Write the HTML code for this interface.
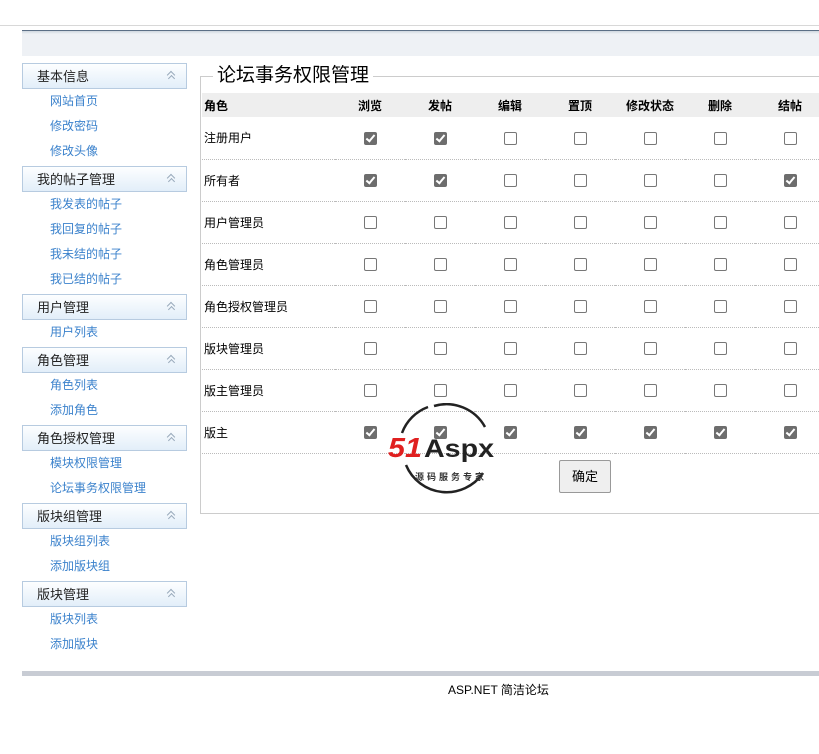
<!DOCTYPE html>
<html><head><meta charset="utf-8"><style>
*{margin:0;padding:0;box-sizing:border-box}
body{width:819px;height:754px;background:#fff;font-family:"Liberation Sans","Noto Sans CJK SC",sans-serif;position:relative;overflow:hidden;color:#000}
.topline{position:absolute;left:0;top:25px;width:819px;height:1px;background:#d8d8d8}
.hbar{position:absolute;left:22px;top:30px;width:797px;height:26px;background:linear-gradient(#cfd6df,#eef1f5 3px,#eef1f5);border-top:1px solid #5b6f86}
.side{position:absolute;left:22px;top:63px;width:165px}
.gh{height:26px;border:1px solid #b7cbe0;background:linear-gradient(#fdfeff,#e2eef9);font-size:13px;line-height:25px;padding-left:14px;position:relative;color:#222}
.gh:after{content:"";position:absolute;right:12px;top:8px;width:5px;height:5px;border-left:1px solid #9ab;border-top:1px solid #9ab;transform:rotate(45deg)}
.gh i{position:absolute;right:12px;top:12px;width:5px;height:5px;border-left:1px solid #9ab;border-top:1px solid #9ab;transform:rotate(45deg)}
.it{height:25px;line-height:25px;font-size:12px;color:#3b82cc;padding-left:28px}
.g{margin-bottom:2px}
fieldset{position:absolute;left:200px;top:66px;width:640px;height:448px;border:1px solid #ccc;border-right:none}
legend{font-size:19px;margin-left:12px;padding:0 4px;line-height:20px}
table{position:absolute;left:202px;top:93px;border-collapse:collapse;font-size:12px;table-layout:fixed;width:623px}
td{height:42px;border-bottom:1px dotted #bbb;text-align:center;width:70px}
td:first-child{width:133px;text-align:left;padding-left:2px}
tr.h td{height:24px;background:#eee;font-weight:bold;border:none}
.c,.u{display:inline-block;width:13px;height:13px;border-radius:2px;vertical-align:middle;position:relative}
.u{border:1px solid #777;background:#fff}
.c{background:#6d6d6d}
.c:after{content:"";position:absolute;left:4px;top:1px;width:3px;height:7px;border-right:2px solid #fff;border-bottom:2px solid #fff;transform:rotate(40deg)}
.btn{position:absolute;left:559px;top:460px;width:52px;height:33px;border:1px solid #999;border-radius:2px;background:#efefef;font-size:13px;text-align:center;line-height:31px}
.fbar{position:absolute;left:22px;top:671px;width:797px;height:5px;background:#c8ccd4}
.ft{position:absolute;left:448px;top:681px;font-size:12px}
.logo{position:absolute;left:388px;top:403px}
</style></head><body>
<div class="topline"></div>
<div class="hbar"></div>
<div class="side">
<div class="g"><div class="gh">基本信息<i></i></div><div class="it">网站首页</div><div class="it">修改密码</div><div class="it">修改头像</div></div>
<div class="g"><div class="gh">我的帖子管理<i></i></div><div class="it">我发表的帖子</div><div class="it">我回复的帖子</div><div class="it">我未结的帖子</div><div class="it">我已结的帖子</div></div>
<div class="g"><div class="gh">用户管理<i></i></div><div class="it">用户列表</div></div>
<div class="g"><div class="gh">角色管理<i></i></div><div class="it">角色列表</div><div class="it">添加角色</div></div>
<div class="g"><div class="gh">角色授权管理<i></i></div><div class="it">模块权限管理</div><div class="it">论坛事务权限管理</div></div>
<div class="g"><div class="gh">版块组管理<i></i></div><div class="it">版块组列表</div><div class="it">添加版块组</div></div>
<div class="g"><div class="gh">版块管理<i></i></div><div class="it">版块列表</div><div class="it">添加版块</div></div>
</div>
<fieldset><legend>论坛事务权限管理</legend></fieldset>
<table>
<tr class="h"><td>角色</td><td>浏览</td><td>发帖</td><td>编辑</td><td>置顶</td><td>修改状态</td><td>删除</td><td>结帖</td></tr>
<tr><td>注册用户</td><td><b class="c"></b></td><td><b class="c"></b></td><td><b class="u"></b></td><td><b class="u"></b></td><td><b class="u"></b></td><td><b class="u"></b></td><td><b class="u"></b></td></tr>
<tr><td>所有者</td><td><b class="c"></b></td><td><b class="c"></b></td><td><b class="u"></b></td><td><b class="u"></b></td><td><b class="u"></b></td><td><b class="u"></b></td><td><b class="c"></b></td></tr>
<tr><td>用户管理员</td><td><b class="u"></b></td><td><b class="u"></b></td><td><b class="u"></b></td><td><b class="u"></b></td><td><b class="u"></b></td><td><b class="u"></b></td><td><b class="u"></b></td></tr>
<tr><td>角色管理员</td><td><b class="u"></b></td><td><b class="u"></b></td><td><b class="u"></b></td><td><b class="u"></b></td><td><b class="u"></b></td><td><b class="u"></b></td><td><b class="u"></b></td></tr>
<tr><td>角色授权管理员</td><td><b class="u"></b></td><td><b class="u"></b></td><td><b class="u"></b></td><td><b class="u"></b></td><td><b class="u"></b></td><td><b class="u"></b></td><td><b class="u"></b></td></tr>
<tr><td>版块管理员</td><td><b class="u"></b></td><td><b class="u"></b></td><td><b class="u"></b></td><td><b class="u"></b></td><td><b class="u"></b></td><td><b class="u"></b></td><td><b class="u"></b></td></tr>
<tr><td>版主管理员</td><td><b class="u"></b></td><td><b class="u"></b></td><td><b class="u"></b></td><td><b class="u"></b></td><td><b class="u"></b></td><td><b class="u"></b></td><td><b class="u"></b></td></tr>
<tr><td>版主</td><td><b class="c"></b></td><td><b class="c"></b></td><td><b class="c"></b></td><td><b class="c"></b></td><td><b class="c"></b></td><td><b class="c"></b></td><td><b class="c"></b></td></tr>
</table>
<div class="btn">确定</div>
<svg class="logo" width="124" height="92" viewBox="0 0 124 92">
<path d="M46 3 A44 44 0 0 1 97 24" fill="none" stroke="#222" stroke-width="2.5"/>
<path d="M18 62 A44 44 0 0 0 95 70" fill="none" stroke="#222" stroke-width="2.5"/>
<path d="M14 30 A44 44 0 0 1 40 4" fill="none" stroke="#222" stroke-width="2.5"/>
<text x="0" y="54" font-family="Liberation Sans" font-weight="bold" font-style="italic" font-size="28" fill="#e02020" textLength="34" lengthAdjust="spacingAndGlyphs">51</text>
<text x="36" y="54" font-family="Liberation Sans" font-weight="bold" font-size="25" fill="#222" textLength="70" lengthAdjust="spacingAndGlyphs">Aspx</text>
<text x="27" y="77" font-family="Noto Sans CJK SC" font-weight="bold" font-size="9" fill="#333" letter-spacing="3">源码服务专家</text>
</svg>
<div class="fbar"></div>
<div class="ft">ASP.NET 简洁论坛</div>
</body></html>
